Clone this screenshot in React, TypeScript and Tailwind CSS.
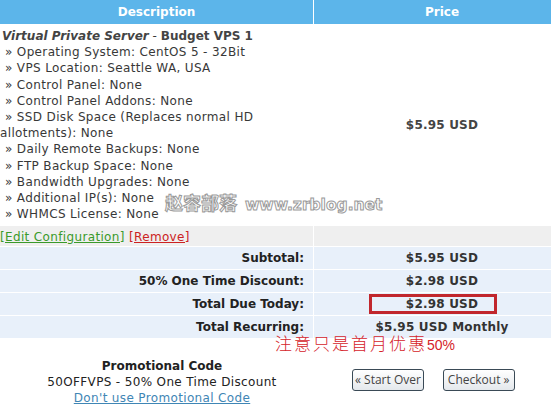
import React from 'react';

const items = [
  'Operating System: CentOS 5 - 32Bit',
  'VPS Location: Seattle WA, USA',
  'Control Panel: None',
  'Control Panel Addons: None',
];
const items2 = [
  'Daily Remote Backups: None',
  'FTP Backup Space: None',
  'Bandwidth Upgrades: None',
  'Additional IP(s): None',
  'WHMCS License: None',
];

const totals = [
  { label: 'Subtotal:', value: '$5.95 USD' },
  { label: '50% One Time Discount:', value: '$2.98 USD' },
  { label: 'Total Due Today:', value: '$2.98 USD' },
  { label: 'Total Recurring:', value: '$5.95 USD Monthly' },
];

export default function App() {
  return (
    <div className="relative w-[551px] h-[407px] bg-white overflow-hidden text-[12px] leading-[16px] tracking-[0.35px] text-[#383838] font-['DejaVu_Sans',Verdana,sans-serif]">
      {/* cart table (right column runs past the window edge) */}
      <div className="grid grid-cols-[313px_256px] gap-px bg-white w-[570px]">
        <div className="h-[24px] bg-[#5cb5ea] text-white font-bold tracking-normal flex items-center justify-center">
          Description
        </div>
        <div className="h-[24px] bg-[#5cb5ea] text-white font-bold tracking-normal flex items-center justify-center">
          Price
        </div>

        <div className="h-[200px] pt-[3px] pl-[2px] leading-[16.2px]">
          <div className="tracking-normal">
            <span className="italic font-bold text-[#444]">Virtual Private Server</span>
            <span> - </span>
            <span className="font-bold text-[#444]">Budget VPS 1</span>
          </div>
          {items.map((t) => (
            <div key={t} className="pl-[3px]">» {t}</div>
          ))}
          <div className="pl-[3px]">» SSD Disk Space (Replaces normal HD</div>
          <div className="-ml-[2px]">allotments): None</div>
          {items2.map((t) => (
            <div key={t} className="pl-[3px]">» {t}</div>
          ))}
        </div>
        <div className="h-[200px] flex items-center justify-center font-bold tracking-[0.2px] text-[#444]">
          $5.95 USD
        </div>

        <div className="h-[20px] bg-[#efefef] flex items-center pt-[2px] whitespace-nowrap">
          <a className="text-[#3a9a2a] underline">[Edit Configuration]</a>
          <span>&nbsp;</span>
          <a className="text-[#cc2222] underline">[Remove]</a>
        </div>
        <div className="h-[20px] bg-[#efefef]" />

        {totals.map((r) => (
          <React.Fragment key={r.label}>
            <div className="h-[22px] bg-[#e8f0fa] flex items-center justify-end pr-[9px] font-bold tracking-normal text-[#222]">
              {r.label}
            </div>
            <div className="h-[22px] bg-[#e8f0fa] flex items-center justify-center font-bold tracking-[0.2px] text-[#333]">
              {r.value}
            </div>
          </React.Fragment>
        ))}
      </div>

      {/* footer */}
      <div className="flex items-start pt-[20px]">
        <div className="w-[324px] text-center text-[#222]">
          <div className="font-bold tracking-normal">Promotional Code</div>
          <div>50OFFVPS - 50% One Time Discount</div>
          <a className="text-[#3f86b5] underline">Don't use Promotional Code</a>
        </div>
        <div className="flex gap-[19px] pl-[28px] pt-[11px] font-['Open_Sans',sans-serif] text-[12px] tracking-normal">
          <button className="h-[22px] px-[2px] rounded-[3px] border border-[#3a4a56] bg-gradient-to-b from-white to-[#e4e8ec] text-[#444]">
            « Start Over
          </button>
          <button className="h-[22px] px-[4px] rounded-[3px] border border-[#3a4a56] bg-gradient-to-b from-white to-[#e4e8ec] text-[#444]">
            Checkout »
          </button>
        </div>
      </div>

      {/* red highlight box drawn over the total */}
      <div className="absolute left-[369px] top-[294px] w-[128px] h-[20px] border-[3px] border-[#c1272d]" />

      {/* watermark */}
      <div className="absolute left-[165px] top-[191px] leading-[22px] font-bold whitespace-nowrap text-white [-webkit-text-stroke:1px_#9a9a9a] tracking-normal">
        <span className="text-[18px] font-['Noto_Sans_CJK_SC',sans-serif]">赵容部落</span>
        <span className="text-[15.5px] font-['DejaVu_Sans',sans-serif] ml-[8px]">www.zrblog.net</span>
      </div>

      {/* annotation */}
      <div className="absolute left-[275px] top-[332px] text-[17px] leading-[22px] text-[#d5232a] whitespace-nowrap font-['Noto_Sans_CJK_SC',sans-serif] tracking-[2px] font-light">
        注意只是首月优惠<span className="font-['Liberation_Sans',sans-serif] text-[14px] tracking-normal">50%</span>
      </div>
    </div>
  );
}
